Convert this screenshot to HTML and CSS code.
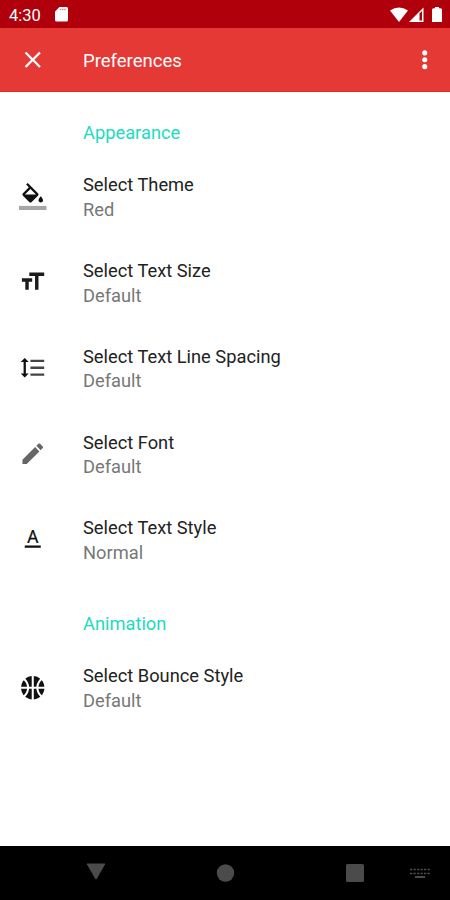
FILE: index.html
```html
<!DOCTYPE html>
<html lang="en">
<head>
    <meta charset="UTF-8">
    <meta name="viewport" content="width=device-width, initial-scale=1.0">
    <title>Preferences</title>
    <link rel="stylesheet" href="styles.css">
</head>
<body>
    <div class="status-bar">
        <span class="clock">4:30</span>
        <svg class="sd-card" viewBox="0 0 13 15"><path d="M4.5 0H11.5Q13 0 13 1.500V13Q13 14.500 11.500 14.500H1.500Q0 14.500 0 13V4.500Z" fill="#fff"/><path d="M4.800 2.500h6" stroke="#d98a8f" stroke-width="1.500" stroke-dasharray="1.500 .7"/></svg>
        <svg class="signals" viewBox="0 0 52 16">
            <path d="M0 3.500Q9 -2.500 18 3.500L9 15Z" fill="#fff"/>
            <path d="M19 15L33.500 0.500V15Z" fill="#fff"/>
            <path d="M29.500 6.500L32 4V13.500H29.500Z" fill="#b0000b"/>
            <path d="M45 0h4v1.200h1.500q1.500 0 1.500 1.500V15H42V2.700q0-1.500 1.500-1.500H45z" fill="#fff"/>
        </svg>
    </div>
    <header class="toolbar">
        <svg class="icon" viewBox="0 0 24 24"><path d="M19 6.410L17.590 5 12 10.590 6.410 5 5 6.410 10.590 12 5 17.590 6.410 19 12 13.410 17.590 19 19 17.590 13.410 12z" fill="#fff"/></svg>
        <h1>Preferences</h1>
        <svg class="icon more" viewBox="0 0 24 24"><g fill="#fff"><circle cx="12" cy="6" r="2.200"/><circle cx="12" cy="12" r="2.200"/><circle cx="12" cy="18" r="2.200"/></g></svg>
    </header>
    <main>
        <h2>Appearance</h2>
        <div class="pref">
            <svg class="icon" viewBox="0 0 24 24"><path d="M16.560 8.940L7.620 0 6.210 1.410l2.380 2.380-5.150 5.150c-.59.59-.59 1.540 0 2.120l5.500 5.500c.29.29.68.440 1.060.440s.77-.15 1.060-.44l5.500-5.500c.59-.58.59-1.530 0-2.120zM5.210 10L10 5.210 14.790 10H5.210zM19 11.500s-2 2.170-2 3.500c0 1.100.9 2 2 2s2-.9 2-2c0-1.330-2-3.500-2-3.500z" fill="#111"/><path d="M0 20h24v4H0z" fill="#a6a6a6"/></svg>
            <div class="pref-text"><h3>Select Theme</h3><p>Red</p></div>
        </div>
        <div class="pref">
            <svg class="icon" viewBox="0 0 24 24"><path d="M9 4h13v3h-5v12h-3V7H9zM2.500 9h9v3h-3v7h-3v-7h-3z" fill="#1b1b1b"/></svg>
            <div class="pref-text"><h3>Select Text Size</h3><p>Default</p></div>
        </div>
        <div class="pref">
            <svg class="icon" viewBox="0 0 24 24"><path d="M6 7h2.500L5 3.500 1.500 7H4v10H1.500L5 20.500 8.500 17H6z" fill="#111"/><path d="M10 5h12v2H10zM10 11h12v2H10zM10 17h12v2H10z" fill="#444"/></svg>
            <div class="pref-text"><h3>Select Text Line Spacing</h3><p>Default</p></div>
        </div>
        <div class="pref">
            <svg class="icon" viewBox="0 0 24 24"><path d="M3 17.250V21h3.750L17.810 9.940l-3.750-3.750L3 17.250zM20.710 7.040c.39-.39.39-1.020 0-1.410l-2.340-2.340c-.39-.39-1.020-.39-1.410 0l-1.830 1.830 3.750 3.750 1.830-1.830z" fill="#666"/></svg>
            <div class="pref-text"><h3>Select Font</h3><p>Default</p></div>
        </div>
        <div class="pref">
            <svg class="icon" viewBox="0 0 24 24"><text class="letter" x="12" y="15" text-anchor="middle">A</text><path d="M5 17h14v2H5z" fill="#111"/></svg>
            <div class="pref-text"><h3>Select Text Style</h3><p>Normal</p></div>
        </div>
        <h2 class="animation">Animation</h2>
        <div class="pref">
            <svg class="icon" viewBox="0 0 24 24"><circle cx="12" cy="12" r="10.200" fill="#111"/><path d="M12 1v22M1 12h22M4 4Q8 7.500 8 12T4 20M20 4Q16 7.500 16 12T20 20" fill="none" stroke="#fff" stroke-width="1.800"/></svg>
            <div class="pref-text"><h3>Select Bounce Style</h3><p>Default</p></div>
        </div>
    </main>
    <nav class="nav-bar">
        <svg viewBox="0 0 450 54">
            <g fill="#4b4b4b">
                <path d="M87.500 17.500h17q1 0 .5 1l-8 14q-1 1.500-2 0l-8-14q-.5-1 .5-1z"/>
                <circle cx="225.500" cy="27" r="8.700"/>
                <rect x="346" y="18" width="18" height="18" rx="1.500"/>
                <rect x="415" y="30" width="10" height="2"/>
            </g>
            <path d="M410 23.500h20M410 27.500h20" stroke="#4b4b4b" stroke-width="1.600" stroke-dasharray="2.300 1.200"/>
        </svg>
    </nav>
</body>
</html>
```

FILE: styles.css
```css
body {
    font-family: Roboto, sans-serif;
    margin: 0;
    height: 900px;
    display: flex;
    flex-direction: column;
    background-color: #fff;
}
h1, h2, h3, p {
    margin: 0;
    font-weight: 400;
}
.status-bar {
    display: flex;
    align-items: center;
    height: 28px;
    padding: 0 8px 0 9px;
    background-color: #b0000b;
}
.clock {
    font-size: 16.5px;
    line-height: 28px;
    width: 46px;
    padding-top: 3px;
    color: #fff;
}
.sd-card {
    width: 13px;
    height: 15px;
    margin-top: 1px;
}
.signals {
    width: 52px;
    height: 16px;
    margin-top: 1px;
    margin-left: auto;
}
.toolbar {
    display: flex;
    align-items: center;
    height: 64px;
    box-sizing: border-box;
    padding: 0 11.5px 0 19px;
    background-color: #e53935;
    border-bottom: 1px solid #dc2c28;
}
.icon {
    width: 27.5px;
    height: 27.5px;
    flex: none;
    margin-right: 36.5px;
}
.toolbar h1 {
    font-size: 18.5px;
    line-height: 24px;
    padding-top: 2px;
    color: #fff;
}
.toolbar .more {
    margin: 0 0 0 auto;
}
main {
    flex: 1;
    padding: 28px 19px 0;
}
h2 {
    height: 26px;
    margin-left: 64px;
    font-size: 18.3px;
    line-height: 26px;
    color: #1ddbc0;
}
.animation {
    margin-top: 28.5px;
}
.pref {
    display: flex;
    align-items: center;
    height: 85.8px;
}
h2 + .pref {
    margin-top: 7.5px;
}
.pref-text {
    padding-top: 3px;
}
h3, p {
    font-size: 18.3px;
    line-height: 24.7px;
}
h3 {
    color: #222;
}
p {
    color: #777;
}
.letter {
    font-size: 15.5px;
    fill: #111;
    stroke: #111;
    stroke-width: 0.2px;
}
.nav-bar {
    height: 54px;
    background-color: #000;
}
.nav-bar svg {
    display: block;
    width: 100%;
    height: 54px;
}
```
